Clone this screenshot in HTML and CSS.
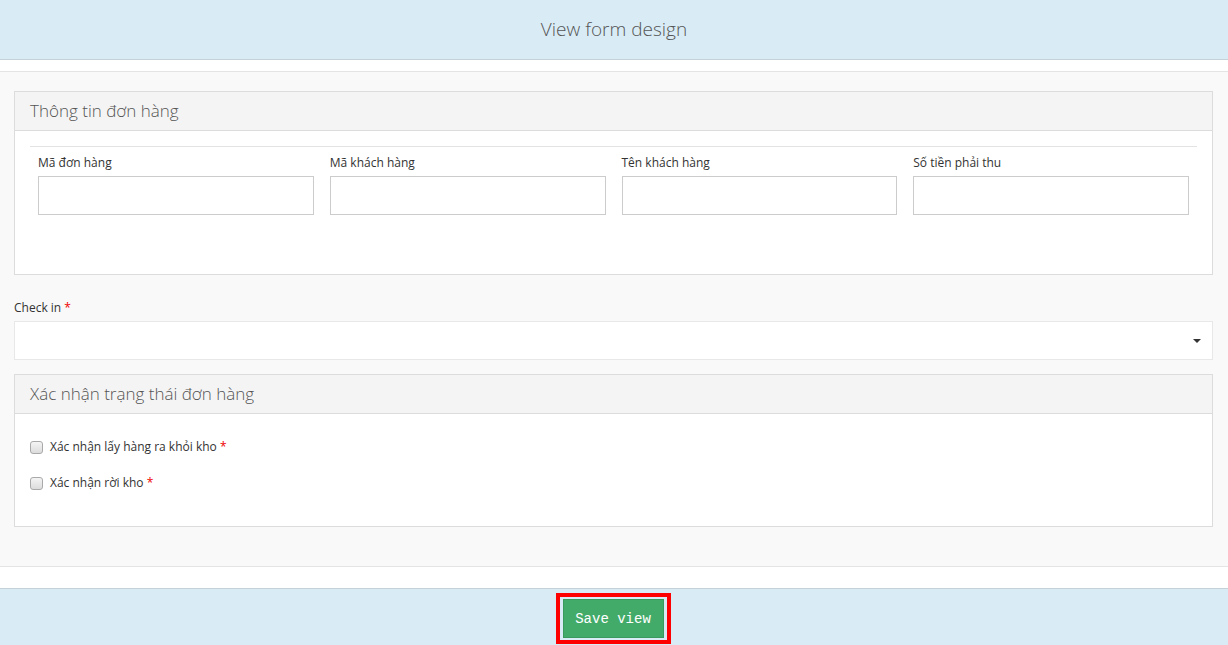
FILE: index.html
```html
<!DOCTYPE html>
<html lang="vi">
<head>
<meta charset="utf-8">
<title>View form design</title>
<link rel="stylesheet" href="styles.css">
</head>
<body>
<header class="topbar">View form design</header>
<div class="strip strip-top"></div>
<main class="content">
  <section class="panel panel-info">
    <div class="panel-heading">Thông tin đơn hàng</div>
    <div class="panel-body">
      <hr class="divider">
      <div class="row">
        <div class="col">
          <label class="field-label">Mã đơn hàng</label>
          <div class="input"></div>
        </div>
        <div class="col">
          <label class="field-label">Mã khách hàng</label>
          <div class="input"></div>
        </div>
        <div class="col">
          <label class="field-label">Tên khách hàng</label>
          <div class="input"></div>
        </div>
        <div class="col">
          <label class="field-label">Số tiền phải thu</label>
          <div class="input"></div>
        </div>
      </div>
    </div>
  </section>

  <div class="checkin">
    <label class="field-label">Check in <span class="req">*</span></label>
    <div class="select"><span class="caret"></span></div>
  </div>

  <section class="panel panel-status">
    <div class="panel-heading">Xác nhận trạng thái đơn hàng</div>
    <div class="panel-body">
      <div class="check-row"><span class="checkbox"></span><span class="check-text">Xác nhận lấy hàng ra khỏi kho <span class="req">*</span></span></div>
      <div class="check-row"><span class="checkbox"></span><span class="check-text">Xác nhận rời kho <span class="req">*</span></span></div>
    </div>
  </section>
</main>
<div class="strip strip-bottom"></div>
<footer class="footbar">
  <div class="highlight">
    <button class="btn-save" type="button">Save view</button>
  </div>
</footer>
</body>
</html>
```

FILE: styles.css
```css
* { box-sizing: border-box; }
html, body { margin: 0; padding: 0; }
body {
  font-family: "Open Sans", "Noto Sans", sans-serif;
  font-size: 12px;
  color: #333;
  background: #fff;
  width: 1228px;
  height: 645px;
  overflow: hidden;
}
.topbar {
  height: 60px;
  line-height: 59px;
  background: #d9ecf5;
  border-bottom: 1px solid #c5d1d9;
  text-align: center;
  font-size: 19px;
  font-weight: 300;
  color: #555;
}
.strip { background: #fff; }
.strip-top { height: 12px; border-bottom: 1px solid #e4e4e4; }
.content {
  background: #f9f9f9;
  padding: 19px 15px 39px 14px;
  border-bottom: 1px solid #e4e4e4;
}
.panel {
  background: #fff;
  border: 1px solid #dcdcdc;
}
.panel-heading {
  height: 39px;
  line-height: 38px;
  padding: 0 15px;
  background: #f4f4f4;
  border-bottom: 1px solid #dcdcdc;
  font-size: 17px;
  font-weight: 300;
  color: #555;
}
.panel-info .panel-body { padding: 15px 15px 59px; }
.divider {
  border: 0;
  border-top: 1px solid #e3e3e3;
  margin: 0 0 7px;
  height: 0;
}
.row { display: flex; }
.col { flex: 1 1 0; padding: 0 8px; }
.field-label {
  display: block;
  line-height: 18px;
  margin-bottom: 4px;
  font-size: 12px;
  color: #333;
}
.input {
  height: 39px;
  border: 1px solid #cccccc;
  background: #fff;
}
.req { color: #e00; }
.checkin { margin-top: 24px; }
.checkin .field-label { margin-bottom: 4px; }
.select {
  position: relative;
  height: 39px;
  border: 1px solid #e8e8e8;
  background: #fff;
}
.caret {
  position: absolute;
  right: 11px;
  top: 17px;
  width: 0;
  height: 0;
  border-left: 4px solid transparent;
  border-right: 4px solid transparent;
  border-top: 4px solid #333;
}
.panel-status { margin-top: 14px; }
.panel-status .panel-body { padding: 24px 15px 16px; }
.check-row {
  display: flex;
  align-items: center;
  height: 18px;
  margin-bottom: 18px;
}
.checkbox {
  width: 13px;
  height: 13px;
  border: 1px solid #a9a9a9;
  border-radius: 3px;
  background: linear-gradient(#f4f4f4, #dcdcdc);
  margin-right: 7px;
  flex: 0 0 auto;
}
.check-text { line-height: 18px; }
.strip-bottom { height: 21px; }
.footbar {
  height: 57px;
  background: #d9ecf5;
  border-top: 1px solid #c5d1d9;
  display: flex;
  justify-content: center;
  align-items: flex-start;
  padding-top: 4px;
}
.highlight {
  border: 4px solid #f00;
  padding: 2px 3px;
  margin-right: 2px;
}
.btn-save {
  display: block;
  width: 101px;
  height: 39px;
  background: #43ab6a;
  border: 1px solid #3a9a5d;
  color: #fff;
  font-family: "Liberation Mono", "DejaVu Sans Mono", monospace;
  font-size: 14px;
  padding: 0;
  cursor: pointer;
}
```
